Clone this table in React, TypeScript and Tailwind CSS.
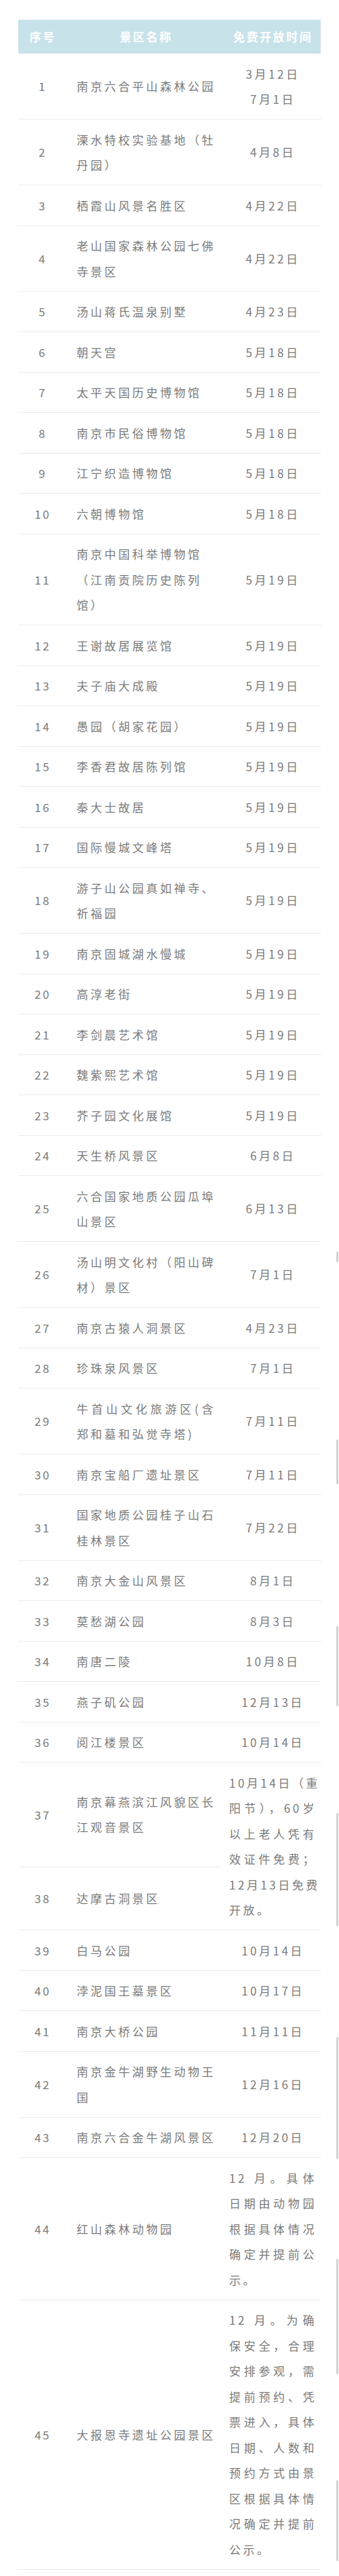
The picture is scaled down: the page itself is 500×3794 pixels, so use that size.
type Row = {
  no: number;
  name: string[];
  date?: string[];
  dateJustify?: boolean;
  span?: boolean;
  plain?: boolean;
  h?: string;
};

const rows: Row[] = [
  { no: 1, name: ["南京六合平山森林公园"], date: ["3月12日", "7月1日"] },
  { no: 2, name: ["溧水特校实验基地（牡", "丹园）"], date: ["4月8日"] },
  { no: 3, name: ["栖霞山风景名胜区"], date: ["4月22日"] },
  { no: 4, name: ["老山国家森林公园七佛", "寺景区"], date: ["4月22日"] },
  { no: 5, name: ["汤山蒋氏温泉别墅"], date: ["4月23日"] },
  { no: 6, name: ["朝天宫"], date: ["5月18日"] },
  { no: 7, name: ["太平天国历史博物馆"], date: ["5月18日"] },
  { no: 8, name: ["南京市民俗博物馆"], date: ["5月18日"] },
  { no: 9, name: ["江宁织造博物馆"], date: ["5月18日"] },
  { no: 10, name: ["六朝博物馆"], date: ["5月18日"] },
  { no: 11, name: ["南京中国科举博物馆", "（江南贡院历史陈列", "馆）"], date: ["5月19日"], plain: true },
  { no: 12, name: ["王谢故居展览馆"], date: ["5月19日"] },
  { no: 13, name: ["夫子庙大成殿"], date: ["5月19日"] },
  { no: 14, name: ["愚园（胡家花园）"], date: ["5月19日"] },
  { no: 15, name: ["李香君故居陈列馆"], date: ["5月19日"] },
  { no: 16, name: ["秦大士故居"], date: ["5月19日"] },
  { no: 17, name: ["国际慢城文峰塔"], date: ["5月19日"] },
  { no: 18, name: ["游子山公园真如禅寺、", "祈福园"], date: ["5月19日"] },
  { no: 19, name: ["南京固城湖水慢城"], date: ["5月19日"] },
  { no: 20, name: ["高淳老街"], date: ["5月19日"] },
  { no: 21, name: ["李剑晨艺术馆"], date: ["5月19日"] },
  { no: 22, name: ["魏紫熙艺术馆"], date: ["5月19日"] },
  { no: 23, name: ["芥子园文化展馆"], date: ["5月19日"] },
  { no: 24, name: ["天生桥风景区"], date: ["6月8日"] },
  { no: 25, name: ["六合国家地质公园瓜埠", "山景区"], date: ["6月13日"] },
  { no: 26, name: ["汤山明文化村（阳山碑", "材）景区"], date: ["7月1日"] },
  { no: 27, name: ["南京古猿人洞景区"], date: ["4月23日"] },
  { no: 28, name: ["珍珠泉风景区"], date: ["7月1日"] },
  { no: 29, name: ["牛首山文化旅游区(含", "郑和墓和弘觉寺塔)"], date: ["7月11日"] },
  { no: 30, name: ["南京宝船厂遗址景区"], date: ["7月11日"] },
  { no: 31, name: ["国家地质公园桂子山石", "桂林景区"], date: ["7月22日"] },
  { no: 32, name: ["南京大金山风景区"], date: ["8月1日"] },
  { no: 33, name: ["莫愁湖公园"], date: ["8月3日"] },
  { no: 34, name: ["南唐二陵"], date: ["10月8日"] },
  { no: 35, name: ["燕子矶公园"], date: ["12月13日"] },
  { no: 36, name: ["阅江楼景区"], date: ["10月14日"] },
  {
    no: 37,
    name: ["南京幕燕滨江风貌区长", "江观音景区"],
    date: ["10月14日（重", "阳节），60岁", "以上老人凭有", "效证件免费；", "12月13日免费", "开放。"],
    dateJustify: true,
    span: true,
    h: "min-h-[153px]",
  },
  { no: 38, name: ["达摩古洞景区"], h: "min-h-[93px]" },
  { no: 39, name: ["白马公园"], date: ["10月14日"] },
  { no: 40, name: ["浡泥国王墓景区"], date: ["10月17日"] },
  { no: 41, name: ["南京大桥公园"], date: ["11月11日"] },
  { no: 42, name: ["南京金牛湖野生动物王", "国"], date: ["12月16日"] },
  { no: 43, name: ["南京六合金牛湖风景区"], date: ["12月20日"] },
  {
    no: 44,
    name: ["红山森林动物园"],
    date: ["12 月。具体", "日期由动物园", "根据具体情况", "确定并提前公", "示。"],
    dateJustify: true,
  },
  {
    no: 45,
    name: ["大报恩寺遗址公园景区"],
    date: [
      "12 月。为确",
      "保安全，合理",
      "安排参观，需",
      "提前预约、凭",
      "票进入，具体",
      "日期、人数和",
      "预约方式由景",
      "区根据具体情",
      "况确定并提前",
      "公示。",
    ],
    dateJustify: true,
  },
];

const scrollMarks = [
  "top-[1843px] h-[16px]",
  "top-[2120px] h-[66px]",
  "top-[2395px] h-[118px]",
  "top-[2670px] h-[167px]",
  "top-[3000px] h-[180px]",
  "top-[3327px] h-[170px]",
  "top-[3653px] h-[119px]",
];

const Lines = ({ lines, justify }: { lines: string[]; justify: boolean }) => (
  <>
    {lines.map((line, i) => (
      <div
        key={i}
        className={
          justify && i < lines.length - 1
            ? "whitespace-nowrap [text-align-last:justify]"
            : "whitespace-nowrap"
        }
      >
        {line}
      </div>
    ))}
  </>
);

const cell = "flex items-center border-b border-[#ececec] py-[10.5px]";

export default function App() {
  return (
    <div className="relative h-[3794px] overflow-hidden bg-white font-['Noto_Sans_CJK_SC',sans-serif]">
      <div className="mx-[27px] mt-[29px] grid h-[50px] grid-cols-[72px_226px_149px] items-center bg-[#c8e2ea] text-[17px] font-bold tracking-[2.5px] text-white">
        <div className="text-center">序号</div>
        <div className="w-[219px] pl-[14px] text-center">景区名称</div>
        <div className="w-[142px] pl-[13px] text-center">免费开放时间</div>
      </div>

      <div className="mx-[27px] grid grid-cols-[72px_226px_149px] text-[17px] leading-[37.5px] tracking-[3.5px] text-[#7b7b7b]">
        {rows.map((row) => (
          <div key={row.no} className="contents">
            <div className={`${cell} justify-center tracking-[2.5px] ${row.h ?? ""}`}>{row.no}</div>
            <div className={`${cell} pl-[14px] ${row.h ?? ""}`}>
              <div className="w-[205px]">
                <Lines lines={row.name} justify={!row.plain} />
              </div>
            </div>
            {row.date && (
              <div className={`${cell} pl-[13px] ${row.span ? "row-span-2" : ""}`}>
                <div className={row.dateJustify ? "w-[129px]" : "w-[129px] text-center"}>
                  <Lines lines={row.date} justify={!!row.dateJustify} />
                </div>
              </div>
            )}
          </div>
        ))}
      </div>

      <div className="flex justify-center pt-[50px]">
        <div className="h-[22px] w-[22px] rounded-full bg-[#d8e6cc]" />
      </div>

      {scrollMarks.map((m, i) => (
        <div key={i} className={`absolute right-[1px] w-[3px] rounded-full bg-[#d2d2d2] ${m}`} />
      ))}
    </div>
  );
}
